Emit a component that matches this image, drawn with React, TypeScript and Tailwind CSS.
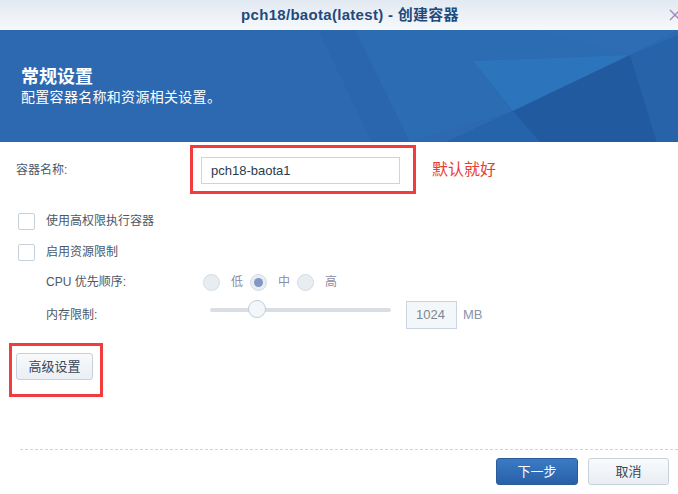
import React from "react";

const FONT = { fontFamily: '"Liberation Sans", "Noto Sans CJK SC", sans-serif' };

function Checkbox() {
    return <div className="w-[17px] h-[17px] bg-white border border-[#c7d1dc] rounded-[2px] shrink-0" />;
}

function Radio({ checked }: { checked?: boolean }) {
    return (
        <div className="w-[17px] h-[17px] rounded-full bg-[#e8edf2] border border-[#d3dbe4] flex items-center justify-center shrink-0">
            {checked && <div className="w-[9px] h-[9px] rounded-full bg-[#8496c4]" />}
        </div>
    );
}

function BannerArt() {
    return (
        <svg className="absolute inset-0 pointer-events-none" width="678" height="112" viewBox="0 0 678 112">
            <polygon points="318,0 355,0 410,112 372,112" fill="#2a66ad" />
            <polygon points="355,0 533,0 630,25 473,31 513,81 410,112" fill="#2b6cb2" />
            <polygon points="473,31 630,25 513,81" fill="#2c74bb" />
            <polygon points="533,0 678,0 630,25" fill="#2e6db3" />
            <polygon points="447,112 513,81 630,25 657,112" fill="#215a9f" />
            <polygon points="630,25 678,5 678,112 657,112" fill="#2663a9" />
            <polygon points="513,81 540,112 447,112" fill="#2564aa" />
        </svg>
    );
}

export default function App() {
    return (
        <div className="w-[678px] h-[494px] bg-white overflow-hidden relative text-[12px]" style={FONT}>
            {/* Title bar */}
            <div className="h-[30px] relative flex items-center justify-center pl-[22px] bg-gradient-to-b from-[#e2e9f2] to-[#f7f9fb]">
                <span className="text-[15px] font-bold text-[#1f4a7c] tracking-[0.3px]">pch18/baota(latest) - 创建容器</span>
                <svg className="absolute right-[-4px] top-[8px]" width="14" height="14" viewBox="0 0 14 14">
                    <path d="M2 2L12 12M12 2L2 12" stroke="#9c8ab8" strokeWidth="1.4" />
                </svg>
            </div>

            {/* Banner */}
            <div className="h-[112px] relative bg-[#2c69b0] overflow-hidden">
                <BannerArt />
                <div className="relative pl-[21px] pt-[36px] text-white">
                    <div className="text-[18px] font-bold leading-[22px]">常规设置</div>
                    <div className="text-[14px] leading-[18px] tracking-[0.3px]">配置容器名称和资源相关设置。</div>
                </div>
            </div>

            {/* Body */}
            <div className="pt-[3px]">
                <div className="flex items-center">
                    <div className="pl-[16px] w-[190px] text-[#4b5868]">容器名称:</div>
                    <div className="border-[3px] border-[#f03c3c] pt-[9px] pb-[7px] pl-[8px] pr-[13px]">
                        <div className="w-[199px] h-[27px] border border-[#cbd5df] bg-white flex items-center pl-[9px] text-[13px] text-[#2c3a4a]">
                            pch18-baota1
                        </div>
                    </div>
                    <div className="ml-[16px] text-[16px] text-[#ea3a34]">默认就好</div>
                </div>

                <div className="mt-[18px] pl-[18px] flex items-center">
                    <Checkbox />
                    <span className="ml-[11px] text-[#4b5868]">使用高权限执行容器</span>
                </div>
                <div className="mt-[13px] pl-[18px] flex items-center">
                    <Checkbox />
                    <span className="ml-[11px] text-[#4b5868]">启用资源限制</span>
                </div>

                <div className="mt-[11px] pl-[46px] flex items-center h-[20px]">
                    <span className="w-[157px] text-[#4b5868]">CPU 优先顺序:</span>
                    <Radio />
                    <span className="ml-[11px] w-[19px] text-[#8c8ca4]">低</span>
                    <Radio checked />
                    <span className="ml-[11px] w-[19px] text-[#8c8ca4]">中</span>
                    <Radio />
                    <span className="ml-[11px] text-[#8c8ca4]">高</span>
                </div>

                <div className="mt-[8px] pl-[46px] flex items-center h-[29px]">
                    <span className="w-[164px] text-[#4b5868]">内存限制:</span>
                    <div className="w-[181px] h-[4px] bg-[#d9dee4] rounded-full relative -mt-[10px]">
                        <div className="absolute left-[38px] top-[-8px] w-[18px] h-[18px] rounded-full bg-[#f4f7fa] border border-[#c3ceda]" />
                    </div>
                    <div className="ml-[15px] w-[51px] h-[28px] border border-[#cbd5df] bg-[#f4f7fa] flex items-center pl-[9px] text-[13px] text-[#7a8796]">
                        1024
                    </div>
                    <span className="ml-[6px] text-[#8a94a8] text-[13px]">MB</span>
                </div>

                <div className="mt-[14px] ml-[9px] w-[94px] h-[54px] border-[3px] border-[#f03c3c] pt-[7px] pl-[4px]">
                    <div className="w-[77px] h-[27px] rounded-[3px] border border-[#c7d1dc] bg-gradient-to-b from-[#f8fafc] to-[#eaeff4] flex items-center justify-center text-[13px] text-[#3a4656]">
                        高级设置
                    </div>
                </div>
            </div>

            {/* Footer */}
            <div className="absolute left-[20px] right-0 top-[449px] border-t border-dashed border-[#cdd5de]" />
            <div className="absolute right-[9px] top-[458px] flex gap-[10px]">
                <div className="w-[82px] h-[27px] rounded-[3px] border border-[#2a5c9c] bg-gradient-to-b from-[#3b7bc4] to-[#2860a8] flex items-center justify-center text-white text-[13px]">
                    下一步
                </div>
                <div className="w-[81px] h-[27px] rounded-[3px] border border-[#c7d1dc] bg-gradient-to-b from-[#f8fafc] to-[#e9eef4] flex items-center justify-center text-[#3a4656] text-[13px]">
                    取消
                </div>
            </div>
        </div>
    );
}
